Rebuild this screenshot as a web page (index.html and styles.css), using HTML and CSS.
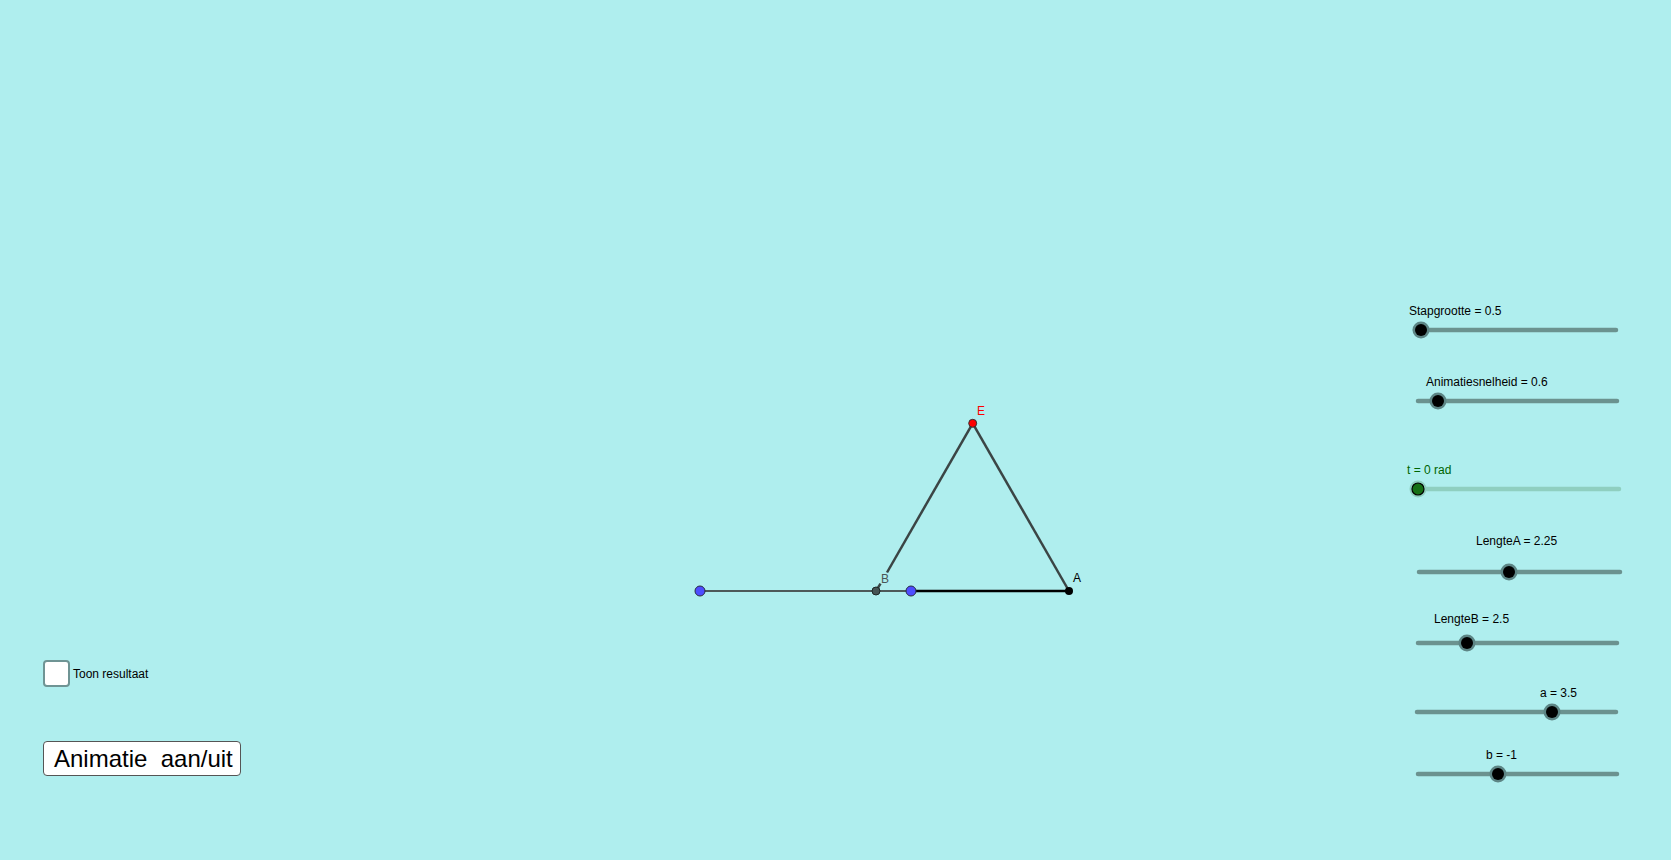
FILE: index.html
```html
<!DOCTYPE html>
<html lang="nl">
<head>
<meta charset="utf-8">
<title>Applet</title>
<link rel="stylesheet" href="styles.css">
</head>
<body>
<div class="applet">
  <svg class="canvas" width="1671" height="860" viewBox="0 0 1671 860" xmlns="http://www.w3.org/2000/svg">
    <!-- geometry -->
    <g class="geo">
      <line x1="700" y1="591" x2="911" y2="591" class="seg-grey"/>
      <line x1="911" y1="591" x2="1069" y2="591" class="seg-black"/>
      <line x1="972.7" y1="423.3" x2="1069" y2="591" class="edge"/>
      <line x1="972.7" y1="423.3" x2="887" y2="572.5" class="edge"/>
      <line x1="880.5" y1="583.7" x2="876" y2="591" class="edge"/>
      <circle cx="700" cy="591" r="5" class="pt-blue"/>
      <circle cx="876" cy="591" r="4" class="pt-b"/>
      <circle cx="911" cy="591" r="5" class="pt-blue"/>
      <circle cx="1069" cy="591" r="4" class="pt-a"/>
      <circle cx="972.7" cy="423.3" r="4" class="pt-e"/>
      <text x="977" y="415" class="lbl lbl-e">E</text>
      <text x="881" y="583" class="lbl lbl-b">B</text>
      <text x="1073" y="582" class="lbl">A</text>
    </g>
    <!-- sliders -->
    <g class="slider">
      <text x="1409" y="315" class="lbl">Stapgrootte = 0.5</text>
      <line x1="1415" y1="330" x2="1616" y2="330" class="track"/>
      <circle cx="1421" cy="330" r="8.5" class="halo"/>
      <circle cx="1421" cy="330" r="6" class="knob"/>
    </g>
    <g class="slider">
      <text x="1426" y="386" class="lbl">Animatiesnelheid = 0.6</text>
      <line x1="1418" y1="401" x2="1617" y2="401" class="track"/>
      <circle cx="1438" cy="401" r="8.5" class="halo"/>
      <circle cx="1438" cy="401" r="6" class="knob"/>
    </g>
    <g class="slider">
      <text x="1407" y="474" class="lbl lbl-t">t = 0 rad</text>
      <line x1="1416" y1="489" x2="1619" y2="489" class="track track-t"/>
      <circle cx="1418" cy="489" r="8.5" class="halo halo-t"/>
      <circle cx="1418" cy="489" r="6" class="knob knob-t"/>
    </g>
    <g class="slider">
      <text x="1476" y="545" class="lbl">LengteA = 2.25</text>
      <line x1="1419" y1="572" x2="1620" y2="572" class="track"/>
      <circle cx="1509" cy="572" r="8.5" class="halo"/>
      <circle cx="1509" cy="572" r="6" class="knob"/>
    </g>
    <g class="slider">
      <text x="1434" y="623" class="lbl">LengteB = 2.5</text>
      <line x1="1418" y1="643" x2="1617" y2="643" class="track"/>
      <circle cx="1467" cy="643" r="8.5" class="halo"/>
      <circle cx="1467" cy="643" r="6" class="knob"/>
    </g>
    <g class="slider">
      <text x="1540" y="697" class="lbl">a = 3.5</text>
      <line x1="1417" y1="712" x2="1616" y2="712" class="track"/>
      <circle cx="1552" cy="712" r="8.5" class="halo"/>
      <circle cx="1552" cy="712" r="6" class="knob"/>
    </g>
    <g class="slider">
      <text x="1486" y="759" class="lbl">b = -1</text>
      <line x1="1418" y1="774" x2="1617" y2="774" class="track"/>
      <circle cx="1498" cy="774" r="8.5" class="halo"/>
      <circle cx="1498" cy="774" r="6" class="knob"/>
    </g>
  </svg>

  <div class="controls">
    <label class="check-row">
      <span class="checkbox"></span>
      <span class="check-text">Toon resultaat</span>
    </label>
    <button class="anim-btn" type="button">Animatie  aan/uit</button>
  </div>
</div>
</body>
</html>
```

FILE: styles.css
```css
html, body {
  margin: 0;
  padding: 0;
  background: #afeeee;
  overflow: hidden;
}

.applet {
  position: relative;
  width: 1671px;
  height: 860px;
  background: #afeeee;
  font-family: "Liberation Sans", Arial, sans-serif;
}

.canvas {
  position: absolute;
  left: 0;
  top: 0;
  display: block;
}

.lbl {
  font-family: "Liberation Sans", Arial, sans-serif;
  font-size: 12px;
  fill: #000;
}

.lbl-e { fill: #ff0000; }
.lbl-b { fill: #4a5656; }
.lbl-t { fill: #006400; }

.seg-grey {
  stroke: #4d5959;
  stroke-width: 2.2;
}

.seg-black {
  stroke: #000;
  stroke-width: 2.5;
}

.edge {
  stroke: #3b4545;
  stroke-width: 2.5;
}

.pt-blue {
  fill: #4d4dff;
  stroke: #2a2a44;
  stroke-width: 1;
}

.pt-b {
  fill: #465454;
  stroke: #1e2626;
  stroke-width: 1;
}

.pt-a {
  fill: #000;
}

.pt-e {
  fill: #ff0000;
  stroke: #333;
  stroke-width: 1;
}

.track {
  stroke: #6b928f;
  stroke-width: 4.5;
  stroke-linecap: round;
}

.track-t {
  stroke: #8fcfc0;
}

.halo {
  fill: #5d8585;
}

.halo-t {
  fill: #8fcfc0;
}

.knob {
  fill: #000;
}

.knob-t {
  fill: #167016;
  stroke: #000;
  stroke-width: 1.2;
}

.controls {
  position: absolute;
  left: 43px;
  top: 660px;
  display: flex;
  flex-direction: column;
  align-items: flex-start;
  gap: 54px;
}

.check-row {
  display: flex;
  align-items: center;
  gap: 3px;
}

.checkbox {
  box-sizing: border-box;
  width: 27px;
  height: 27px;
  background: #fff;
  border: 2px solid #6f9494;
  border-radius: 4px;
}

.check-text {
  font-size: 12px;
  color: #000;
  padding-top: 1px;
}

.anim-btn {
  box-sizing: border-box;
  width: 198px;
  height: 35px;
  padding: 0 0 0 10px;
  margin: 0;
  background: #fff;
  border: 1px solid #555;
  border-radius: 4px;
  font-family: "Liberation Sans", Arial, sans-serif;
  font-size: 24px;
  color: #000;
  text-align: left;
  white-space: pre;
  line-height: 33px;
}
```
